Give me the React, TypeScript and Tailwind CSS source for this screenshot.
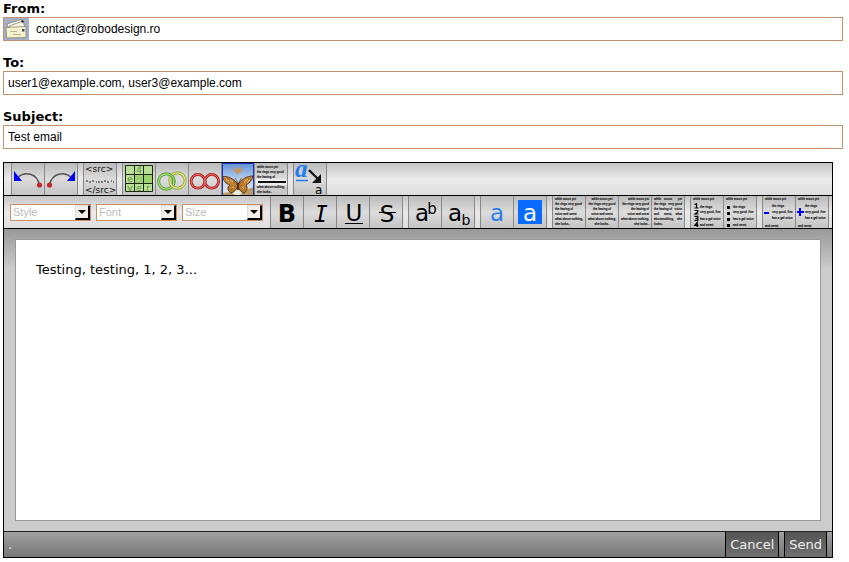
import type { ReactNode } from "react";

const copy = [
  "while moon yet",
  "the rings very good",
  "the having of",
  "voice and  seest",
  "what above nothing,",
  "she looks..",
];

const rows = [4, 9, 14, 19, 24, 29];

function Tiny({ x, y, children, anchor = "start" }: { x: number; y: number; children: ReactNode; anchor?: "start" | "middle" | "end" }) {
  return (
    <text x={x} y={y} textAnchor={anchor} fontSize="2.9" fontWeight="700" fill="#222" stroke="#222" strokeWidth="0.12" fontFamily="Liberation Sans, sans-serif">
      {children}
    </text>
  );
}

function Icon({ children }: { children: ReactNode }) {
  return (
    <svg viewBox="0 0 32 32" className="block size-8 overflow-visible" aria-hidden="true">
      {children}
    </svg>
  );
}

function AlignIcon({ align }: { align: "left" | "center" | "right" }) {
  const x = { left: 2, center: 16, right: 30 }[align];
  const anchor = { left: "start", center: "middle", right: "end" }[align] as "start" | "middle" | "end";
  return (
    <Icon>
      {copy.map((line, i) => (
        <Tiny key={line} x={x} y={rows[i]} anchor={anchor}>{line}</Tiny>
      ))}
    </Icon>
  );
}

function JustifyIcon() {
  const lines = [["while", "moon", "yet"], ["the rings", "very good"], ["the having of", "voice"], ["and", "seest,", "what"], ["above", "nothing,", "she"], ["looks.."]];
  return (
    <Icon>
      {lines.map((words, i) =>
        words.map((word, j) => {
          const last = words.length - 1;
          const anchor = j === 0 ? "start" : j === last ? "end" : "middle";
          const x = j === 0 ? 2 : j === last ? 30 : 16;
          return <Tiny key={word} x={x} y={rows[i]} anchor={anchor}>{word}</Tiny>;
        })
      )}
    </Icon>
  );
}

function ListIcon({ kind }: { kind: "numbers" | "bullets" | "outdent" | "indent" }) {
  const isList = kind === "numbers" || kind === "bullets";
  const ys = isList ? [12, 17, 24, 30] : [11, 17, 23, 31];
  const items = ["the rings", "very good, fine", "has a gal voice", "and  seest"];
  return (
    <Icon>
      <Tiny x={2} y={4}>while moon yet</Tiny>
      {items.map((item, i) => (
        <Tiny key={item} x={isList || i < 3 ? 9 : 2} y={ys[i]}>{item}</Tiny>
      ))}
      {kind === "numbers" && (
        <path
          d="M3.5 8.5L5.5 7.6V12M3.5 12H7.5M3.5 14.5H6.8V16L4 18H7.5M3.5 20.4H6.8V24.4H3.5M4.5 22.4H6.8M6.2 31V26.4L3.8 29.4H7.5"
          fill="none"
          stroke="#000"
          strokeWidth="1.2"
        />
      )}
      {kind === "bullets" && <path d="M3 10h3v3H3zM3 16h3v3H3zM3 22h3v3H3zM3 28h3v3H3z" fill="#000" />}
      {kind === "outdent" && <path d="M1 16h5v2H1z" fill="#00f" />}
      {kind === "indent" && <path d="M1 15h2v-3h2v3h3v2H5v3H3v-3H1z" fill="#00f" />}
    </Icon>
  );
}

function UndoIcon() {
  return (
    <Icon>
      <path d="M6 14C13 8 25 10 27.500 22" fill="none" stroke="#555" strokeWidth="1.500" />
      <path d="M2 8v10h8z" fill="#00f" />
      <circle cx="27.500" cy="22" r="2.600" fill="#c1272d" />
    </Icon>
  );
}

function RedoIcon() {
  return (
    <Icon>
      <path d="M26 14C19 8 7 10 4.500 22" fill="none" stroke="#555" strokeWidth="1.500" />
      <path d="M30 8v10h-8z" fill="#00f" />
      <circle cx="4.500" cy="22" r="2.600" fill="#c1272d" />
    </Icon>
  );
}

function SourceIcon() {
  return (
    <Icon>
      <g fontSize="9" fontFamily="DejaVu Sans, sans-serif" fill="#111">
        <text x="1" y="9">&lt;src&gt;</text>
        <text x="1" y="30">&lt;/src&gt;</text>
      </g>
      <path d="M2 18h2m1 1h2m1-1h2m2 1h1m1 0h2m1 0h2m1-1h2m1 1h2m2-1h1m1 1h1" stroke="#222" strokeWidth="1" />
    </Icon>
  );
}

function TableIcon() {
  return (
    <Icon>
      <path d="M2 2h28v27H2z" fill="#b9de95" />
      <path d="M12 12h17v8H12z" fill="#9ed06d" />
      <path d="M2.500 2.500h27v26h-27zM11.500 2v27M20.500 2v27M2 11.500h28M2 20.500h28" fill="none" stroke="#1c2815" strokeWidth="1" />
      <g fontSize="9" fontFamily="DejaVu Sans, sans-serif" fill="#5f9140" textAnchor="middle">
        <text x="16" y="10">4</text>
        <text x="7" y="19">e</text>
        <text x="7" y="28">v</text>
        <text x="16" y="28">e</text>
        <text x="25" y="28">r</text>
      </g>
    </Icon>
  );
}

function LinkIcon() {
  return (
    <Icon>
      <g fill="none">
        <circle cx="10.300" cy="18.500" r="7.700" stroke="#4f9a26" strokeWidth="3" />
        <circle cx="10.300" cy="18.500" r="7.700" stroke="#a6e27c" strokeWidth="1.300" />
        <circle cx="21.500" cy="17.500" r="7.700" stroke="#93a52e" strokeWidth="3" />
        <circle cx="21.500" cy="17.500" r="7.700" stroke="#e2e98c" strokeWidth="1.300" />
        <path d="M13.500 11.500A7.700 7.700 0 0 1 17.900 20" stroke="#4f9a26" strokeWidth="3" />
        <path d="M13.500 11.500A7.700 7.700 0 0 1 17.900 20" stroke="#a6e27c" strokeWidth="1.300" />
      </g>
    </Icon>
  );
}

function UnlinkIcon() {
  return (
    <Icon>
      <g fill="none">
        <circle cx="9" cy="18.300" r="6.900" stroke="#b01c1c" strokeWidth="2.800" />
        <circle cx="22.800" cy="18.300" r="6.900" stroke="#b01c1c" strokeWidth="2.800" />
        <circle cx="9" cy="18.300" r="6.900" stroke="#ea7c74" strokeWidth="1" />
        <circle cx="22.800" cy="18.300" r="6.900" stroke="#ea7c74" strokeWidth="1" />
      </g>
    </Icon>
  );
}

function ImageIcon() {
  return (
    <Icon>
      <defs>
        <linearGradient id="sky" x1="0" y1="0" x2="0" y2="1">
          <stop offset="0" stopColor="#5f8fd8" />
          <stop offset="0.500" stopColor="#b9cdea" />
          <stop offset="1" stopColor="#eeeae0" />
        </linearGradient>
        <linearGradient id="wing" x1="0" y1="0" x2="0" y2="1">
          <stop offset="0" stopColor="#c98a3a" />
          <stop offset="1" stopColor="#b87526" />
        </linearGradient>
      </defs>
      <path d="M0 0h32v32H0z" fill="url(#sky)" />
      <path d="M18 32l5-5 9-3v8zM0 30l9-1 4 3H0z" fill="#b99a66" />
      <path d="M10 6l4 1-3-4 5 3 4-3-2 4 4-1-4 4-3 1z" fill="#c9975c" />
      <path
        d="M16 21C11 15 5 13 0.800 13.500c0.200 4 3 7 7 8.500-3 2-2 6 1 8 4-1 6-4 7.200-7 1 4 3 6 6 7 3-2 4-5 2-8 4-2 6-5 7-9-6 0-11 3-15 8z"
        fill="url(#wing)"
        stroke="#4b2f10"
        strokeWidth="0.900"
      />
      <path d="M5 15l10 6-6 6M28 15l-11 6 5 6" fill="none" stroke="#6b431b" strokeWidth="0.500" />
      <path d="M4 16.500l3 1.500M8 17l3 2M26 16l-4 3M28 17l-3 3M10 24l2 1M20 24l2 2" stroke="#ecc07a" strokeWidth="1" />
      <path d="M16 20v7" stroke="#3a240d" strokeWidth="1.600" />
      <path d="M16 20l-3-5M16.500 20l3-5" stroke="#2c2010" strokeWidth="0.600" />
      <path d="M0.500 32V0.500h31V32" fill="none" stroke="#1434b4" />
    </Icon>
  );
}

function RuleIcon() {
  return (
    <Icon>
      <path d="M1 16h31v6H1z" fill="#eee" />
      <path d="M3 18h28v2H3z" fill="#111" />
      <Tiny x={2} y={5}>while moon yet</Tiny>
      <Tiny x={2} y={10}>the rings very good</Tiny>
      <Tiny x={2} y={15}>the having of</Tiny>
      <Tiny x={2} y={25}>what above nothing,</Tiny>
      <Tiny x={2} y={30}>she looks..</Tiny>
    </Icon>
  );
}

function ClearFormatIcon() {
  return (
    <Icon>
      <text x="1" y="14" fontSize="25" fontStyle="italic" fontWeight="700" fontFamily="Liberation Serif, serif" fill="#1f7cf2">a</text>
      <path d="M2 17.500h12" stroke="#1f7cf2" strokeWidth="1.500" />
      <path d="M15 7l9 9" stroke="#111" strokeWidth="2.200" />
      <path d="M27 11v9h-9z" fill="#111" />
      <text x="21" y="31" fontSize="12" fontFamily="DejaVu Sans, sans-serif" fill="#000">a</text>
    </Icon>
  );
}

function LetterIcon({ name }: { name: string }) {
  const font = { fontFamily: "DejaVu Sans, sans-serif", fontSize: 23, textAnchor: "middle" as const };
  return (
    <Icon>
      {name === "Bold" && <text {...font} x="16" y="26" fontSize="24" fontWeight="700">B</text>}
      {name === "Italic" && <text {...font} x="17" y="26" fontFamily="DejaVu Sans Mono, monospace" fontStyle="italic">I</text>}
      {name === "Underline" && (
        <>
          <text {...font} x="17" y="25">U</text>
          <path d="M8 27.500h18" stroke="#000" />
        </>
      )}
      {name === "Strikethrough" && (
        <>
          <text {...font} x="17" y="26">S</text>
          <path d="M9 16.500h17" stroke="#000" />
        </>
      )}
      {name === "Superscript" && (
        <>
          <text {...font} x="13" y="25">a</text>
          <text {...font} x="23" y="18" fontSize="15">b</text>
        </>
      )}
      {name === "Subscript" && (
        <>
          <text {...font} x="13" y="25">a</text>
          <text {...font} x="24" y="29" fontSize="14">b</text>
        </>
      )}
      {name === "Text color" && <text {...font} x="16" y="25" fill="#2f7cf0">a</text>}
      {name === "Background color" && (
        <>
          <path d="M4 4h24v24H4z" fill="#0a6cff" />
          <text {...font} x="16" y="25" fill="#fff">a</text>
        </>
      )}
    </Icon>
  );
}

function MailIcon() {
  return (
    <svg viewBox="0 0 25 22" className="block h-[22px] w-[25px] shrink-0" aria-hidden="true">
      <path d="M0 0h25v22H0z" fill="#a5b0c6" />
      <g stroke="#77776a" strokeWidth="0.700">
        <path d="M3 6L17 1.500l3 8-14 4z" fill="#fbfbf2" />
        <path d="M5 8l14-5 2.500 8L8 15z" fill="#f4f2df" />
        <path d="M2 9.500L22 8.500v11L2.500 20z" fill="#f7f2cd" />
      </g>
      <path d="M17 3l2-1 1 2-2 1z" fill="#333" />
      <path d="M18 11h2.500v2.500H18z" fill="#374c55" />
      <path d="M6 13.500h7M9 16.500h8" stroke="#a8a384" strokeWidth="0.800" />
    </svg>
  );
}

function Group({ items }: { items: [string, ReactNode][] }) {
  return (
    <div className="flex border-l border-[#888]">
      {items.map(([label, icon]) => (
        <button
          key={label}
          type="button"
          aria-label={label}
          title={label}
          className="border-r border-[#888] bg-linear-to-b from-[#bbb] via-[#dcdcdc] to-[#c4c4c4] hover:brightness-105"
        >
          {icon}
        </button>
      ))}
    </div>
  );
}

function Dropdown({ label }: { label: string }) {
  return (
    <div className="relative h-[17px] w-[81px] border border-[#c98f69] bg-white">
      <select
        aria-label={label}
        className="block h-full w-full appearance-none pl-0.5 font-['Liberation_Sans',sans-serif] text-[11px] leading-[15px] text-[#bbb] outline-none"
      >
        <option>{label}</option>
      </select>
      <span className="pointer-events-none absolute inset-y-0 right-0 flex w-[15px] items-center justify-center border-t border-r-2 border-b-2 border-l border-t-[#ddd] border-r-black border-b-black border-l-[#ddd] bg-[#f2eeea]">
        <svg viewBox="0 0 8 4" className="h-1 w-2" aria-hidden="true">
          <path d="M0 0h8L4 4z" />
        </svg>
      </span>
    </div>
  );
}

function Field({ id, label, value, icon }: { id: string; label: string; value: string; icon?: ReactNode }) {
  return (
    <div className="mb-[14px]">
      <label htmlFor={id} className="block text-[13px] leading-4 font-bold">{label}</label>
      <div className="flex h-6 border border-[#c0916f] bg-white">
        {icon}
        <input
          id={id}
          defaultValue={value}
          className={`min-w-0 flex-1 font-['Liberation_Sans',sans-serif] text-xs outline-none ${icon ? "pl-[7px]" : "pl-1"}`}
        />
      </div>
    </div>
  );
}

const toolbar = "flex gap-[5px] border-b border-black bg-linear-to-b from-[#c6c6c6] via-[#eaeaea] to-[#dedede]";

export default function App() {
  return (
    <form className="pt-px pr-[6px] pl-[3px] font-['DejaVu_Sans',sans-serif] text-black" onSubmit={(e) => e.preventDefault()}>
      <Field id="from" label="From:" value="contact@robodesign.ro" icon={<MailIcon />} />
      <Field id="to" label="To:" value="user1@example.com, user3@example.com" />
      <Field id="subject" label="Subject:" value="Test email" />

      <div className="-mt-px mr-[10px] border border-black">
        {/* insert tools */}
        <div className={`${toolbar} pl-[7px]`}>
          <Group items={[["Undo", <UndoIcon />], ["Redo", <RedoIcon />]]} />
          <Group items={[["Source", <SourceIcon />]]} />
          <Group
            items={[
              ["Table", <TableIcon />],
              ["Link", <LinkIcon />],
              ["Unlink", <UnlinkIcon />],
              ["Image", <ImageIcon />],
              ["Horizontal rule", <RuleIcon />],
            ]}
          />
          <Group items={[["Remove formatting", <ClearFormatIcon />]]} />
        </div>

        {/* text formatting */}
        <div className={`${toolbar} pl-[6px]`}>
          <div className="mr-0.5 flex items-center gap-[5px]">
            <Dropdown label="Style" />
            <Dropdown label="Font" />
            <Dropdown label="Size" />
          </div>
          <Group items={["Bold", "Italic", "Underline", "Strikethrough"].map((name) => [name, <LetterIcon name={name} />])} />
          <Group items={["Superscript", "Subscript"].map((name) => [name, <LetterIcon name={name} />])} />
          <Group items={["Text color", "Background color"].map((name) => [name, <LetterIcon name={name} />])} />
          <Group
            items={[
              ["Align left", <AlignIcon align="left" />],
              ["Align center", <AlignIcon align="center" />],
              ["Align right", <AlignIcon align="right" />],
              ["Justify", <JustifyIcon />],
            ]}
          />
          <Group items={[["Numbered list", <ListIcon kind="numbers" />], ["Bulleted list", <ListIcon kind="bullets" />]]} />
          <Group items={[["Outdent", <ListIcon kind="outdent" />], ["Indent", <ListIcon kind="indent" />]]} />
        </div>

        {/* message body */}
        <div className="bg-linear-to-b from-[#999] to-[#ccc] to-[40px] px-[11px] py-[10px]">
          <textarea
            aria-label="Message"
            rows={12}
            defaultValue="Testing, testing, 1, 2, 3..."
            className="block w-full resize-none border border-[#999] bg-white p-5 text-[13px] leading-5 outline-none"
          />
        </div>

        {/* status bar */}
        <div className="flex border-t border-[#222] bg-linear-to-b from-[#a0a0a0] to-[#777] text-[13px] leading-[25px] text-[#eee]">
          <span className="flex-1 pl-1">.</span>
          <div className="mr-[5px] flex gap-[5px]">
            <button type="button" className="border-x border-black bg-linear-to-b from-[#555] to-[#707070] px-1 hover:brightness-110">Cancel</button>
            <button type="submit" className="border-x border-black bg-linear-to-b from-[#555] to-[#707070] px-1 hover:brightness-110">Send</button>
          </div>
        </div>
      </div>
    </form>
  );
}
